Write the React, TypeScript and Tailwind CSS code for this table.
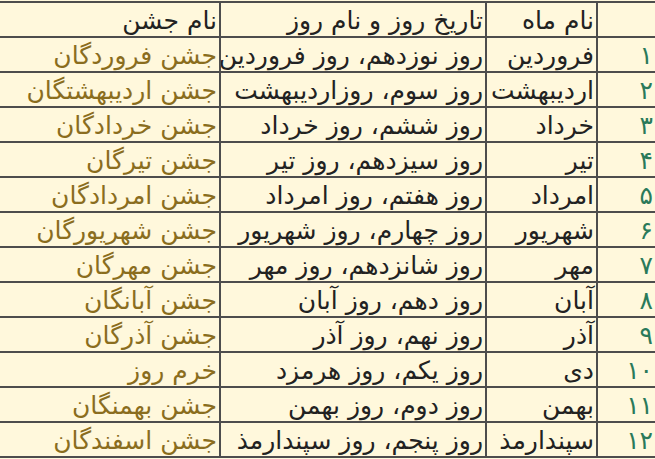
const rows = [
  ["۱", "فروردین", "روز نوزدهم، روز فروردین", "جشن فروردگان"],
  ["۲", "اردیبهشت", "روز سوم، روزاردیبهشت", "جشن اردیبهشتگان"],
  ["۳", "خرداد", "روز ششم، روز خرداد", "جشن خردادگان"],
  ["۴", "تیر", "روز سیزدهم، روز تیر", "جشن تیرگان"],
  ["۵", "امرداد", "روز هفتم، روز امرداد", "جشن امردادگان"],
  ["۶", "شهریور", "روز چهارم، روز شهریور", "جشن شهریورگان"],
  ["۷", "مهر", "روز شانزدهم، روز مهر", "جشن مهرگان"],
  ["۸", "آبان", "روز دهم، روز آبان", "جشن آبانگان"],
  ["۹", "آذر", "روز نهم، روز آذر", "جشن آذرگان"],
  ["۱۰", "دی", "روز یکم، روز هرمزد", "خرم روز"],
  ["۱۱", "بهمن", "روز دوم، روز بهمن", "جشن بهمنگان"],
  ["۱۲", "سپندارمذ", "روز پنجم، روز سپندارمذ", "جشن اسفندگان"],
];

const cell = "border-2 border-[#4d4d4d] h-[35px] px-[2px] pt-[3px] text-right align-middle whitespace-nowrap overflow-hidden";

export default function App() {
  return (
    <div className="w-[655px] h-[459px] overflow-hidden bg-[#fff8dc]">
      <table
        dir="rtl"
        className="table-fixed border-collapse bg-[#fff8dc] w-[680px] -ml-[23px] mt-[1px] text-[25px] leading-[28px] font-['DejaVu_Sans',sans-serif] text-[#222]"
      >
        <colgroup>
          <col className="w-[59px]" />
          <col className="w-[111px]" />
          <col className="w-[266px]" />
          <col />
        </colgroup>
        <thead>
          <tr>
            <th className={`${cell} font-normal`}></th>
            <th className={`${cell} font-normal`}>نام ماه</th>
            <th className={`${cell} font-normal`}>تاریخ روز و نام روز</th>
            <th className={`${cell} font-normal`}>نام جشن</th>
          </tr>
        </thead>
        <tbody>
          {rows.map((r) => (
            <tr key={r[0]}>
              <td className={`${cell} text-[#2a7a5a]`}>{r[0]}</td>
              <td className={cell}>{r[1]}</td>
              <td className={cell}>{r[2]}</td>
              <td className={`${cell} text-[#8a6d1e]`}>{r[3]}</td>
            </tr>
          ))}
        </tbody>
      </table>
    </div>
  );
}
